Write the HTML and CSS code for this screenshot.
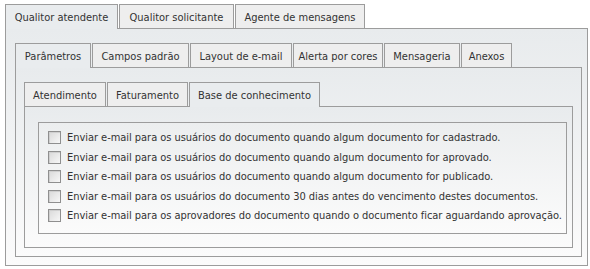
FILE: index.html
```html
<!DOCTYPE html>
<html lang="pt">
<head>
<meta charset="utf-8">
<title>Parâmetros</title>
<link rel="stylesheet" href="styles.css">
</head>
<body>
<div class="tabs l1">
  <ul class="tabbar">
    <li class="tab active w113">Qualitor atendente</li>
    <li class="tab w115">Qualitor solicitante</li>
    <li class="tab w130">Agente de mensagens</li>
  </ul>
  <div class="panel p1">
    <div class="tabs l2">
      <ul class="tabbar">
        <li class="tab active w76">Parâmetros</li>
        <li class="tab w97">Campos padrão</li>
        <li class="tab w102">Layout de e-mail</li>
        <li class="tab w90">Alerta por cores</li>
        <li class="tab w76">Mensageria</li>
        <li class="tab w51">Anexos</li>
      </ul>
      <div class="panel p2">
        <div class="tabs l3">
          <ul class="tabbar">
            <li class="tab w82">Atendimento</li>
            <li class="tab w81">Faturamento</li>
            <li class="tab active w131">Base de conhecimento</li>
          </ul>
          <div class="panel p3">
            <div class="box">
              <label class="row"><span class="check"></span>Enviar e-mail para os usuários do documento quando algum documento for cadastrado.</label>
              <label class="row"><span class="check"></span>Enviar e-mail para os usuários do documento quando algum documento for aprovado.</label>
              <label class="row"><span class="check"></span>Enviar e-mail para os usuários do documento quando algum documento for publicado.</label>
              <label class="row"><span class="check"></span>Enviar e-mail para os usuários do documento 30 dias antes do vencimento destes documentos.</label>
              <label class="row"><span class="check"></span>Enviar e-mail para os aprovadores do documento quando o documento ficar aguardando aprovação.</label>
            </div>
          </div>
        </div>
      </div>
    </div>
  </div>
</div>
</body>
</html>
```
FILE: styles.css
```css
html, body {
  margin: 0;
  background: #ffffff;
}
body {
  padding: 4px 0 0 5px;
  font-family: "DejaVu Sans Condensed", "DejaVu Sans", sans-serif;
  font-stretch: condensed;
  font-size: 11px;
  color: #333333;
}
.tabs {
  display: flex;
  flex-direction: column;
}
.l1 {
  width: 583px;
}
.tabbar {
  list-style: none;
  margin: 0;
  padding: 0;
  display: flex;
  align-items: flex-start;
  gap: 1px;
  position: relative;
  z-index: 1;
}
.tab {
  box-sizing: border-box;
  height: 24px;
  border: 1px solid #9c9c9c;
  border-bottom: none;
  background: #eeeeee;
  padding: 3px 0 0 0;
  line-height: 20px;
  text-align: center;
  white-space: nowrap;
  overflow: hidden;
}
.tab.active {
  height: 25px;
  margin-bottom: -1px;
  background: #e9ecee;
}
.w51 { width: 51px; }
.w76 { width: 76px; }
.w81 { width: 81px; }
.w82 { width: 82px; }
.w90 { width: 90px; }
.w97 { width: 97px; }
.w102 { width: 102px; }
.w113 { width: 113px; }
.w115 { width: 115px; }
.w130 { width: 130px; }
.w131 { width: 131px; }
.panel {
  box-sizing: border-box;
  border: 1px solid #9c9c9c;
  background: linear-gradient(#e8ebed, #fbfbfb);
}
.p1 {
  padding: 14px 5px 8px 9px;
}
.p2 {
  padding: 14px 8px 8px 8px;
}
.p3 {
  padding: 15px 5px 13px 13px;
}
.box {
  border: 1px solid #9c9c9c;
  background: linear-gradient(#eceeef, #fbfbfb);
  padding: 5px 0 7px 9px;
  display: flex;
  flex-direction: column;
}
.row {
  height: 19.5px;
  display: flex;
  align-items: center;
  white-space: nowrap;
  letter-spacing: -0.04px;
}
.check {
  box-sizing: border-box;
  width: 13px;
  height: 13px;
  border: 1px solid #8f8f8f;
  background: linear-gradient(135deg, #d9d9d9, #f7f7f7);
  box-shadow: inset 1px 1px 0 #cfcfcf;
  margin-right: 6px;
  flex: none;
}
```
